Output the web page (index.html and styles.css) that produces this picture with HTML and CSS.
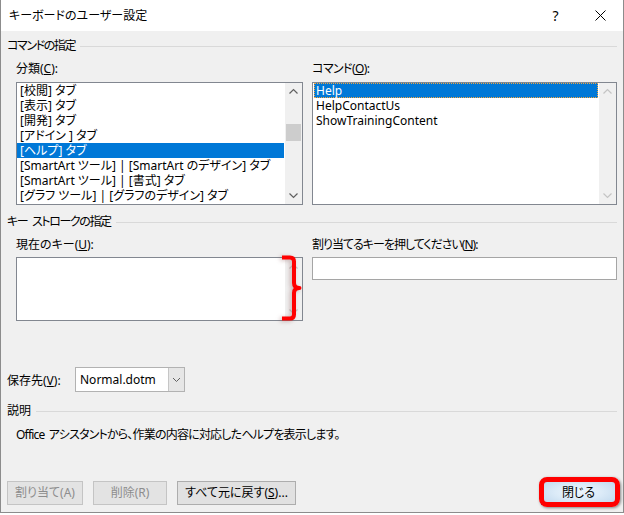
FILE: index.html
```html
<!DOCTYPE html>
<html lang="ja">
<head>
<meta charset="utf-8">
<title>キーボードのユーザー設定</title>
<link rel="stylesheet" href="styles.css">
</head>
<body>
<div class="window">
  <div class="titlebar">
    <span class="title">キーボードのユーザー設定</span>
    <span class="tb-btn help">?</span>
    <span class="tb-btn close"><svg width="11" height="11" viewBox="0 0 11 11"><path d="M0.5 0.5L10.5 10.5M10.5 0.5L0.5 10.5" stroke="#000" stroke-width="1" fill="none"/></svg></span>
  </div>
  <div class="content">
    <div class="group group-cmd">コマンドの指定</div>
    <div class="cols">
      <div class="col col-left">
        <div class="label">分類(<u>C</u>):</div>
        <div class="listbox listbox-tall">
          <ul class="items">
            <li>[校閲] タブ</li>
            <li>[表示] タブ</li>
            <li>[開発] タブ</li>
            <li>[アドイン ] タブ</li>
            <li class="sel">[ヘルプ] タブ</li>
            <li>[SmartArt ツール] | [SmartArt のデザイン] タブ</li>
            <li>[SmartArt ツール] | [書式] タブ</li>
            <li>[グラフ ツール] | [グラフのデザイン] タブ</li>
          </ul>
          <div class="vscroll">
            <svg class="arrow" width="17" height="17" viewBox="0 0 17 17"><path d="M4.5 10.5L8.5 6.5L12.5 10.5" stroke="#606060" stroke-width="1.2" fill="none"/></svg>
            <div class="track"><div class="thumb"></div></div>
            <svg class="arrow" width="17" height="17" viewBox="0 0 17 17"><path d="M4.5 6.5L8.5 10.5L12.5 6.5" stroke="#606060" stroke-width="1.2" fill="none"/></svg>
          </div>
        </div>
      </div>
      <div class="col col-right">
        <div class="label label-cmd">コマンド(<u>O</u>):</div>
        <div class="listbox listbox-tall">
          <ul class="items">
            <li class="sel focus">Help</li>
            <li>HelpContactUs</li>
            <li>ShowTrainingContent</li>
          </ul>
          <div class="vscroll disabled">
            <svg class="arrow" width="17" height="17" viewBox="0 0 17 17"><path d="M4.5 10.5L8.5 6.5L12.5 10.5" stroke="#c4c4c4" stroke-width="1.2" fill="none"/></svg>
            <div class="track"></div>
            <svg class="arrow" width="17" height="17" viewBox="0 0 17 17"><path d="M4.5 6.5L8.5 10.5L12.5 6.5" stroke="#c4c4c4" stroke-width="1.2" fill="none"/></svg>
          </div>
        </div>
      </div>
    </div>

    <div class="group group-keys">キー ストロークの指定</div>
    <div class="cols">
      <div class="col col-left">
        <div class="label">現在のキー(<u>U</u>):</div>
        <div class="listbox listbox-short">
          <ul class="items"></ul>
          <div class="vscroll disabled">
            <svg class="arrow" width="17" height="17" viewBox="0 0 17 17"><path d="M4.5 10.5L8.5 6.5L12.5 10.5" stroke="#c4c4c4" stroke-width="1.2" fill="none"/></svg>
            <div class="track"></div>
            <svg class="arrow" width="17" height="17" viewBox="0 0 17 17"><path d="M4.5 6.5L8.5 10.5L12.5 6.5" stroke="#c4c4c4" stroke-width="1.2" fill="none"/></svg>
          </div>
          <svg class="brace" width="22" height="68" viewBox="0 0 22 68"><path d="M2 2.5H10Q14 2.5 14 6.5V28Q14 33 19.5 33Q14 33 14 38V59.5Q14 63.5 10 63.5H2" stroke="#ff0000" stroke-width="4" fill="none" stroke-linejoin="round"/></svg>
        </div>
      </div>
      <div class="col col-right">
        <div class="label label-press">割り当てるキーを押してください(<u>N</u>):</div>
        <div class="textbox"></div>
      </div>
    </div>

    <div class="save-row">
      <span class="save-label">保存先(<u>V</u>):</span>
      <div class="combo">
        <span class="combo-text">Normal.dotm</span>
        <span class="combo-btn"><svg width="15" height="23" viewBox="0 0 15 23"><path d="M4 10L7.5 13.5L11 10" stroke="#606060" stroke-width="1" fill="none"/></svg></span>
      </div>
    </div>

    <div class="group group-desc">説明</div>
    <p class="desc">Office アシスタントから、作業の内容に対応したヘルプを表示します。</p>

    <div class="buttons">
      <button class="btn btn-disabled btn-assign">割り当て(A)</button>
      <button class="btn btn-disabled btn-delete">削除(R)</button>
      <button class="btn btn-reset">すべて元に戻す(<u>S</u>)...</button>
      <button class="btn btn-close">閉じる<span class="mark"></span></button>
    </div>
  </div>
</div>
</body>
</html>
```

FILE: styles.css
```css
* { box-sizing: border-box; }

body {
  margin: 0;
  background: #ffffff;
  font-family: "Noto Sans", "Noto Sans CJK JP", sans-serif;
  font-size: 12px;
  font-feature-settings: "palt" 1;
  color: #000;
}

.window {
  width: 624px;
  height: 513px;
  background: #f0f0f0;
  border-left: 1px solid #8c8c8c;
  border-right: 1px solid #8c8c8c;
  border-bottom: 1px solid #8c8c8c;
}

.titlebar {
  height: 31px;
  background: #ffffff;
  display: flex;
  align-items: center;
}

.title {
  flex: 1;
  padding-left: 8px;
  line-height: 16px;
}

.tb-btn {
  width: 46px;
  height: 31px;
  display: flex;
  align-items: center;
  justify-content: center;
}

.help {
  font-size: 14px;
  padding-left: 3px;
}

.content {
  padding: 0 6px;
}

.group {
  display: flex;
  align-items: center;
  height: 16px;
  line-height: 16px;
  margin-top: 7px;
  white-space: nowrap;
}

.group::after {
  content: "";
  flex: 1;
  height: 1px;
  background: #d9d9d9;
  margin-left: 5px;
}

.group-cmd { letter-spacing: -1.4px; }
.group-keys { margin-top: 9px; letter-spacing: -1.4px; word-spacing: 3px; }
.group-desc { margin-top: 11px; }

.cols {
  display: flex;
  gap: 9px;
  padding-left: 9px;
}

.col-left { width: 287px; }
.col-right { width: 305px; }

.label {
  height: 16px;
  line-height: 16px;
  margin-top: 7px;
  white-space: nowrap;
}

.label-cmd { letter-spacing: -0.6px; }
.label-press { letter-spacing: -1px; }

.listbox {
  position: relative;
  display: flex;
  background: #ffffff;
  border: 1px solid #828790;
}

.listbox-tall {
  margin-top: 5px;
  height: 123px;
}

.listbox-short {
  margin-top: 4px;
  height: 64px;
}

.items {
  list-style: none;
  margin: 0;
  padding: 0;
  flex: 1;
  overflow: hidden;
}

.items li {
  height: 15px;
  line-height: 15px;
  padding-left: 3px;
  margin-right: 1px;
  white-space: nowrap;
}

.items li.sel {
  background: #0078d7;
  color: #ffffff;
}

.col-right .items li {
  margin-left: 1px;
  padding-left: 2px;
}

.items li.focus {
  border: 1px dotted #f2a640;
  line-height: 13px;
  padding-left: 1px;
}

.vscroll {
  width: 17px;
  background: #f0f0f0;
  display: flex;
  flex-direction: column;
}

.arrow {
  display: block;
  flex: none;
}

.track {
  flex: 1;
}

.thumb {
  margin: 24px 1px 0 1px;
  height: 17px;
  background: #cdcdcd;
}

.brace {
  position: absolute;
  left: 263px;
  top: -3px;
  filter: drop-shadow(-2px 1px 2px rgba(120, 60, 60, 0.35));
}

.textbox {
  margin-top: 4px;
  height: 23px;
  background: #ffffff;
  border: 1px solid #a5a5a5;
}

.save-row {
  display: flex;
  align-items: center;
  margin-top: 46px;
  height: 25px;
}

.save-label {
  width: 68px;
  white-space: nowrap;
}

.combo {
  width: 110px;
  height: 25px;
  display: flex;
  background: #ffffff;
  border: 1px solid #b2b2b2;
}

.combo-text {
  flex: 1;
  padding-left: 4px;
  line-height: 23px;
  font-size: 12px;
}

.combo-btn {
  width: 16px;
  background: #e6e6e6;
  border-left: 1px solid #c6c6c6;
}

.combo-btn svg { display: block; }

.desc {
  margin: 8px 0 0 9px;
  height: 16px;
  line-height: 16px;
  white-space: nowrap;
  letter-spacing: -0.8px;
  word-spacing: 2px;
}

.buttons {
  display: flex;
  margin-top: 38px;
  gap: 10px;
}

.btn {
  height: 24px;
  padding: 0;
  font-family: inherit;
  font-size: 12px;
  font-feature-settings: "palt" 1;
  line-height: 22px;
  background: #e1e1e1;
  border: 1px solid #adadad;
  color: #000;
  white-space: nowrap;
}

.btn-disabled {
  background: #e3e3e3;
  border-color: #c4c4c4;
  color: #8d8d8d;
}

.btn-assign { width: 76px; }
.btn-delete { width: 74px; }
.btn-reset { width: 119px; }

.btn-close {
  position: relative;
  width: 75px;
  margin-left: auto;
  margin-right: 1px;
  border-color: #0078d7;
  background: radial-gradient(ellipse at 50% 45%, #eef6fd 0%, #dcebf8 45%, #bcd5ec 100%);
}

.mark {
  position: absolute;
  top: -5px;
  left: -3px;
  right: -5px;
  bottom: -3px;
  border: 5px solid #ff0000;
  border-radius: 8px;
  box-shadow: 1px 1px 3px rgba(0, 0, 0, 0.45);
}
```
